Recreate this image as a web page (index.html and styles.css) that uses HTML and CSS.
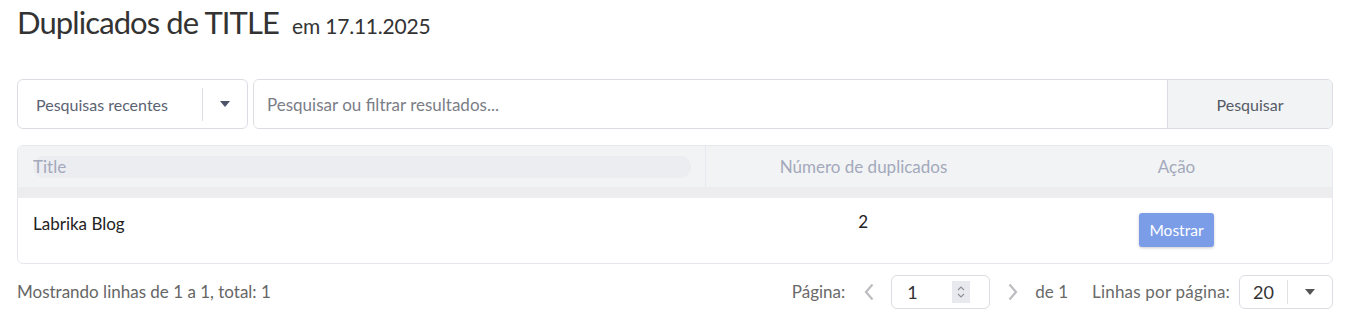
FILE: index.html
```html
<!DOCTYPE html>
<html lang="pt">
<head>
    <meta charset="UTF-8">
    <title>Duplicados de TITLE</title>
    <link rel="stylesheet" href="styles.css">
</head>
<body>
    <div class="page">
        <h1 class="page-title">Duplicados de TITLE <small>em 17.11.2025</small></h1>

        <div class="search-bar">
            <div class="recent-select">
                <span class="recent-label">Pesquisas recentes</span>
                <span class="recent-arrow"><span class="caret"></span></span>
            </div>
            <div class="search-group">
                <input class="search-input" type="text" placeholder="Pesquisar ou filtrar resultados...">
                <button class="search-button">Pesquisar</button>
            </div>
        </div>

        <div class="table-wrap">
            <table class="results">
                <thead>
                    <tr>
                        <th class="col-title"><span class="th-pill">Title</span></th>
                        <th class="col-count">Número de duplicados</th>
                        <th class="col-action">Ação</th>
                    </tr>
                </thead>
                <tbody>
                    <tr>
                        <td class="col-title">Labrika Blog</td>
                        <td class="col-count">2</td>
                        <td class="col-action"><button class="show-button">Mostrar</button></td>
                    </tr>
                </tbody>
            </table>
        </div>

        <div class="table-footer">
            <div class="rows-info">Mostrando linhas de 1 a 1, total: 1</div>
            <div class="pager">
                <span class="pager-label">Página:</span>
                <span class="pager-arrow">
                    <svg width="10" height="18" viewBox="0 0 10 18"><path d="M8.5 1.5L2 9l6.5 7.5" fill="none" stroke="#bdbdc1" stroke-width="2.2"/></svg>
                </span>
                <div class="page-input">
                    <span>1</span>
                    <span class="spinner">
                        <svg width="10" height="18" viewBox="0 0 10 18"><path d="M2 7l3-3 3 3M2 11l3 3 3-3" fill="none" stroke="#8d8f98" stroke-width="1.1"/></svg>
                    </span>
                </div>
                <span class="pager-arrow">
                    <svg width="10" height="18" viewBox="0 0 10 18"><path d="M1.5 1.5L8 9l-6.5 7.5" fill="none" stroke="#bdbdc1" stroke-width="2.2"/></svg>
                </span>
                <span class="pager-label">de 1</span>
                <span class="pager-label per-page">Linhas por página:</span>
                <div class="per-page-select">
                    <span class="per-page-value">20</span>
                    <span class="per-page-arrow"><span class="caret small"></span></span>
                </div>
            </div>
        </div>
    </div>
</body>
</html>
```

FILE: styles.css
```css
body {
    margin: 0;
    background: #fff;
    font-family: "Lato", "Liberation Sans", sans-serif;
    color: #333;
}
.page {
    padding: 0 15px 0 17px;
}
.page-title {
    margin: 0;
    font-size: 31px;
    letter-spacing: -0.9px;
    line-height: 44px;
    font-weight: 400;
    color: #333;
    height: 79px;
}
.page-title small {
    font-size: 21px;
    letter-spacing: -0.2px;
    margin-left: 6px;
}
.search-bar {
    display: flex;
    gap: 5px;
    height: 50px;
}
.recent-select {
    width: 229px;
    display: flex;
    align-items: center;
    border: 1px solid #dcdce2;
    border-radius: 6px;
}
.recent-label {
    flex: 1;
    padding-left: 18px;
    font-size: 16px;
    color: #5b6273;
}
.recent-arrow {
    width: 44px;
    height: 33px;
    display: flex;
    align-items: center;
    justify-content: center;
    border-left: 1px solid #dcdce2;
}
.caret {
    width: 0;
    height: 0;
    border-left: 5px solid transparent;
    border-right: 5px solid transparent;
    border-top: 6px solid #4d5468;
}
.caret.small {
    border-top-color: #555;
}
.search-group {
    flex: 1;
    display: flex;
    border: 1px solid #dcdce2;
    border-radius: 6px;
    overflow: hidden;
}
.search-input {
    flex: 1;
    border: none;
    outline: none;
    padding: 0 13px;
    font-family: inherit;
    font-size: 17px;
    color: #333;
}
.search-input::placeholder {
    color: #7b7e87;
}
.search-button {
    width: 165px;
    border: none;
    border-left: 1px solid #dcdce2;
    background: #f2f3f5;
    font-family: inherit;
    font-size: 16px;
    color: #555b66;
}
.table-wrap {
    margin-top: 16px;
    border: 1px solid #e6e7ec;
    border-radius: 6px;
    overflow: hidden;
}
.results {
    width: 100%;
    border-collapse: collapse;
}
.results th {
    background: #f2f3f5;
    font-weight: 400;
    font-size: 17px;
    color: #a3a9bb;
    height: 41px;
    padding: 0;
    border-bottom: 11px solid #ededef;
}
.results th.col-title {
    width: 658px;
    text-align: left;
    padding: 0 14px 0 15px;
    border-right: 1px solid #e3e8f1;
}
.th-pill {
    display: block;
    background: #ecedf1;
    border-radius: 11px;
    height: 22px;
    line-height: 21px;
}
.results th.col-count {
    width: 315px;
}
.results td {
    font-size: 17px;
    color: #222;
    padding: 0;
    vertical-align: top;
}
.results td.col-title {
    padding-left: 15px;
    padding-top: 15px;
}
.results td.col-count {
    text-align: center;
    padding-top: 13px;
}
.results td.col-action {
    text-align: center;
    padding: 15px 0 16px;
}
.show-button {
    display: block;
    margin: 0 auto;
    background: #7b9de8;
    color: #fff;
    border: none;
    border-radius: 3px;
    height: 34px;
    padding: 0 10px;
    font-family: inherit;
    font-size: 15.5px;
    box-shadow: 0 1px 3px rgba(0,0,0,0.2);
}
.table-footer {
    display: flex;
    align-items: center;
    justify-content: space-between;
    padding-top: 10px;
    height: 35px;
}
.rows-info {
    font-size: 17px;
    color: #666;
}
.pager {
    display: flex;
    align-items: center;
    font-size: 17px;
    color: #666;
}
.pager-label {
    color: #6a6a6a;
}
.pager-arrow {
    display: flex;
    margin: 0 17px 0 19px;
}
.page-input + .pager-arrow {
    margin: 0 17px 0 18px;
}
.page-input {
    width: 99px;
    height: 34px;
    border: 1px solid #dcdce2;
    border-radius: 6px;
    display: flex;
    align-items: center;
    justify-content: space-between;
    padding: 0 19px 0 15px;
    box-sizing: border-box;
    font-size: 18px;
    color: #333;
}
.spinner {
    display: flex;
    background: #e8e9ee;
    width: 18px;
    height: 22px;
    align-items: center;
    justify-content: center;
}
.per-page {
    margin-left: 24px;
    letter-spacing: 0.2px;
}
.per-page-select {
    margin-left: 9px;
    width: 94px;
    height: 34px;
    border: 1px solid #dcdce2;
    border-radius: 6px;
    box-sizing: border-box;
    display: flex;
    align-items: center;
}
.per-page-value {
    width: 47px;
    text-align: center;
    font-size: 18px;
    color: #333;
    border-right: 1px solid #e2e2e6;
    line-height: 24px;
}
.per-page-arrow {
    flex: 1;
    display: flex;
    justify-content: center;
}
```
